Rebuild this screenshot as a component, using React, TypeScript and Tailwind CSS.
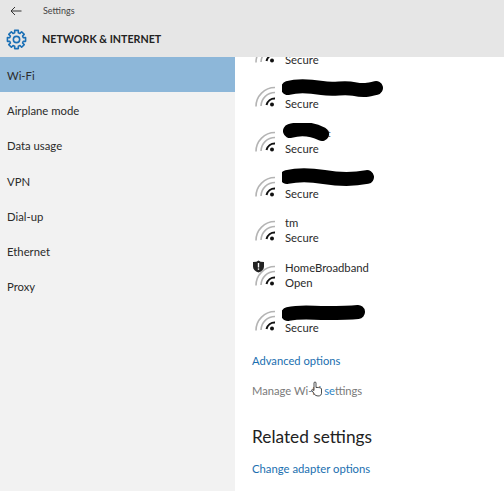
const NAV = ["Wi-Fi", "Airplane mode", "Data usage", "VPN", "Dial-up", "Ethernet", "Proxy"];

type Network = { name?: string; status: string; blob?: string; shield?: boolean; leftover?: string };

const NETWORKS: Network[] = [
  { status: "Secure" },
  { status: "Secure", blob: "M6 9 C16 6 28 7 40 9 S62 8 72 10 S86 11 94 9" },
  { status: "Secure", blob: "M8 8 C18 5 30 6 40 11", leftover: "t" },
  { status: "Secure", blob: "M5 9 C18 6 30 7 42 9 S70 12 85 9" },
  { name: "tm", status: "Secure" },
  { name: "HomeBroadband", status: "Open", shield: true },
  { status: "Secure", blob: "M6 12 C20 9 30 11 44 11 S66 11 76 10" },
];

// 8 tooth gear outline for the page icon
const GEAR = Array.from({ length: 8 }, (_, i) => {
  const a = (i * Math.PI) / 4;
  const pts = [
    [-0.2, 10.6],
    [0.2, 10.6],
    [0.26, 8],
    [0.52, 8],
  ];
  return pts
    .map(([d, r]) => `${(12 + r * Math.sin(a + d)).toFixed(2)},${(12 - r * Math.cos(a + d)).toFixed(2)}`)
    .join(" ");
}).join(" ");

function WifiIcon({ shield }: { shield?: boolean }) {
  return (
    <svg width="32" height="32" viewBox="0 0 32 32" fill="none" className="shrink-0">
      <path d="M4 27.5 A19 19 0 0 1 23 8.5" stroke="#b4b4b4" strokeWidth="1.6" />
      <path d="M9 27 A14 14 0 0 1 23 13.5" stroke="#b4b4b4" strokeWidth="1.6" />
      <path d="M14.5 26 A8.5 8.5 0 0 1 23 19.5" stroke="#111111" strokeWidth="2" />
      <circle cx="20" cy="25.5" r="2" fill="#111111" />
      {shield && (
        <g>
          <path d="M1 4 Q5 4 6.5 2.5 Q8 4 12 4 V8.5 Q12 12.5 6.5 14.5 Q1 12.5 1 8.5 Z" fill="#222222" />
          <rect x="5.8" y="5" width="1.4" height="4.5" fill="#ffffff" />
          <rect x="5.8" y="10.4" width="1.4" height="1.4" fill="#ffffff" />
        </g>
      )}
    </svg>
  );
}

export default function App() {
  return (
    <div className="w-[504px] h-[491px] overflow-hidden flex flex-col bg-white font-['Lato','Noto_Sans',sans-serif] text-[#2b2b2b]">
      {/* Title bar */}
      <header className="h-[57px] shrink-0 bg-[#e6e6e6] flex flex-col">
        <div className="h-[21px] flex items-center pl-[10px]">
          <svg width="12" height="10" viewBox="0 0 12 10" fill="none" stroke="#333333" strokeWidth="1">
            <path d="M11.5 5 H1 M5 1 L1 5 L5 9" />
          </svg>
          <span className="ml-[21px] text-[9px] text-[#444444]">Settings</span>
        </div>
        <div className="flex items-center pl-[6px] mt-[8px]">
          <svg width="21" height="21" viewBox="0 0 24 24" fill="none" stroke="#1a6fb5" strokeWidth="1.8" strokeLinejoin="round">
            <polygon points={GEAR} />
            <circle cx="12" cy="12" r="3.6" />
          </svg>
          <span className="ml-[15px] text-[10.7px] font-bold text-[#222222]">NETWORK &amp; INTERNET</span>
        </div>
      </header>

      <div className="flex flex-1 min-h-0">
        {/* Sidebar */}
        <nav className="w-[235px] shrink-0 bg-[#f2f2f2]">
          {NAV.map((item, i) => (
            <div
              key={item}
              className={`h-[35.3px] flex items-center pl-[7px] pt-[3px] text-[11.3px] ${i === 0 ? "bg-[#8db7d9]" : ""}`}
            >
              {item}
            </div>
          ))}
        </nav>

        {/* Network list */}
        <main className="flex-1 min-w-0 overflow-hidden pl-[17px]">
          <div className="-mt-[35px]">
            {NETWORKS.map((n, i) => (
              <div key={i} className="h-[44.7px] flex items-end relative">
                <WifiIcon shield={n.shield} />
                <div className="ml-[1px] text-[11.3px] leading-[15px]">
                  <div className="h-[15px]">{n.name}</div>
                  <div>{n.status}</div>
                </div>
                {n.leftover && (
                  <span className="absolute left-[75px] top-[15px] text-[10px] text-[#555555]">{n.leftover}</span>
                )}
                {n.blob && (
                  <svg width="104" height="24" viewBox="0 0 104 24" fill="none" className="absolute left-[30px] top-[12px]">
                    <path d={n.blob} stroke="#000000" strokeWidth="14" strokeLinecap="round" />
                  </svg>
                )}
              </div>
            ))}
            <div className="mt-[18px] text-[11.2px] leading-[16px] text-[#1a6fb0]">Advanced options</div>
            <div className="mt-[14px] text-[11.2px] leading-[16px] text-[#7a7a7a] relative w-fit">
              Manage Wi-Fi <span className="text-[#2f86c5]">se</span>ttings
              <svg width="13" height="16" viewBox="0 0 13 16" className="absolute left-[58px] top-[-2px]" fill="#ffffff" stroke="#222222" strokeWidth="0.8" strokeLinejoin="round">
                <path d="M4 2 a1 1 0 0 1 2 0 V6.5 l1-.2 .2 .2 1.2-.1 .3 .3 1.2 0 1.6 1 V11 Q12 15 8 15 Q5 15 4 12.5 L1.5 9 Q2 7.5 4 9.5 Z" />
              </svg>
            </div>
            <div className="mt-[26px] text-[17.3px] leading-[24px] text-[#222222]">Related settings</div>
            <div className="mt-[12px] text-[11.3px] leading-[16px] text-[#1a6fb0]">Change adapter options</div>
          </div>
        </main>
      </div>
    </div>
  );
}
